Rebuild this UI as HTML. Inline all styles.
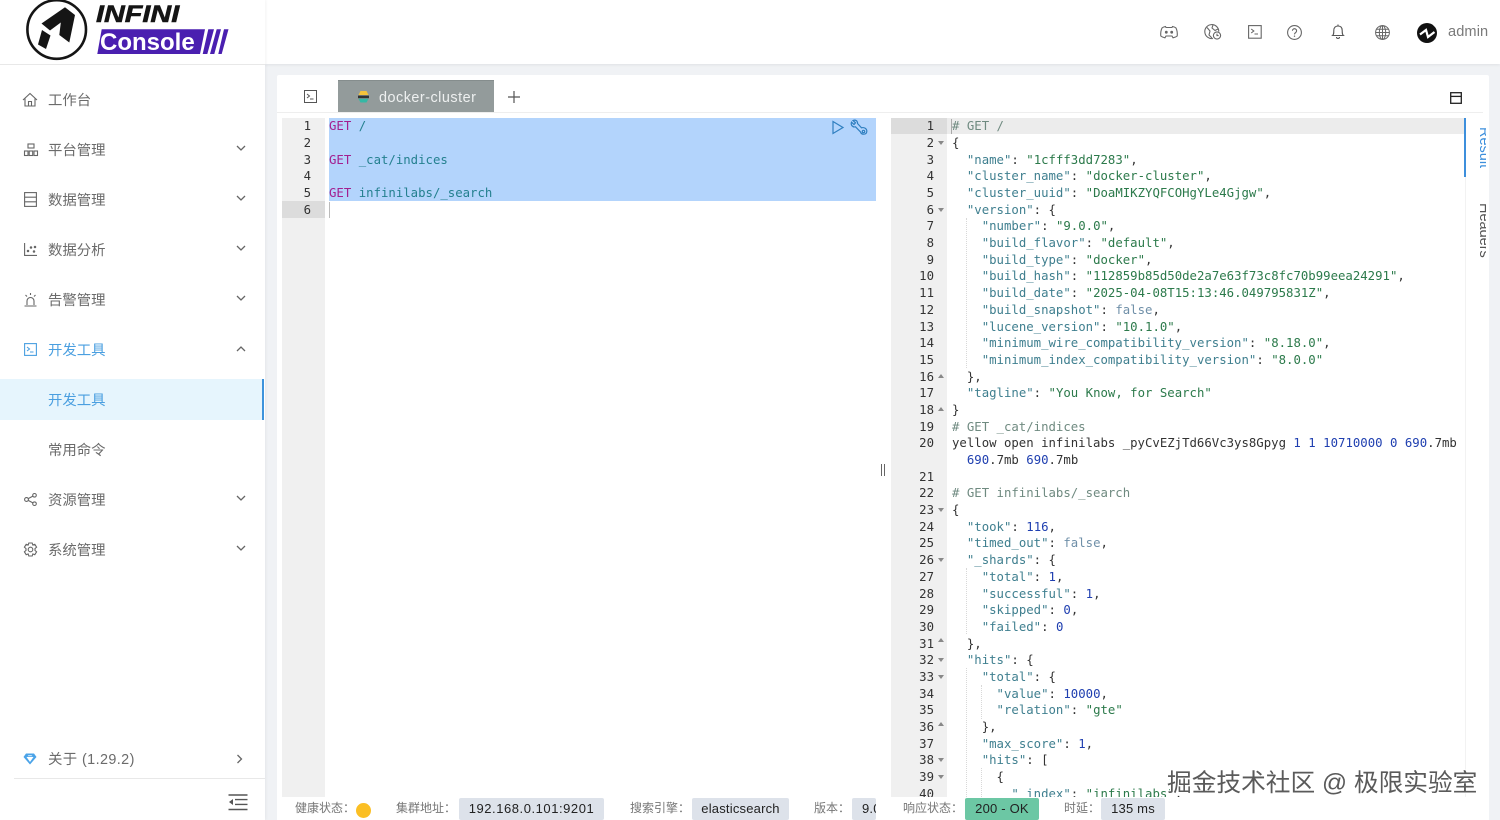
<!DOCTYPE html>
<html lang="zh">
<head>
<meta charset="utf-8">
<title>INFINI Console</title>
<style>
html,body{margin:0;padding:0;width:1500px;height:820px;overflow:hidden;background:#f0f2f5;font-family:"Liberation Sans","Noto Sans CJK SC",sans-serif}
.a{position:absolute}
svg{position:absolute;overflow:visible}
#side{left:0;top:0;width:265px;height:820px;background:#fff;box-shadow:1px 0 3px rgba(0,0,0,.05)}
#head{left:265px;top:0;width:1235px;height:64px;background:#fff;box-shadow:0 1px 3px rgba(0,0,0,.07)}
.m{position:absolute;left:48px;font-size:14.4px;line-height:20px;color:#6b6b6b;white-space:nowrap}
.ic{fill:none;stroke:#666;stroke-width:1.1}
.ch{fill:none;stroke:#666;stroke-width:1.3}
pre{position:absolute;margin:0;font-family:"DejaVu Sans Mono","Liberation Mono",monospace;font-size:12.33px;line-height:16.68px;color:#333;white-space:pre}
.k{color:#3f7f8f}.s{color:#2c7a4b}.n{color:#1f3fb0}.b{color:#6f8fa8}.c{color:#6f8a80}.g{color:#a31f8f}.p{color:#24808f}
.l{position:absolute;font-size:12px;line-height:16px;color:#777;white-space:nowrap;top:800px}
.pill{position:absolute;top:798px;height:22px;background:#dde2ea;border-radius:2px;font-size:13px;line-height:22px;letter-spacing:.2px;color:#222;text-align:center;white-space:nowrap;overflow:hidden}
</style>
</head>
<body>
<div class="a" id="head"></div>
<div class="a" id="side"></div>
<div class="a" style="left:0;top:64px;width:265px;height:1px;background:#e8e8e8"></div>

<!-- Logo -->
<svg style="left:0;top:0" width="265" height="64">
  <circle cx="56.7" cy="29.5" r="29.3" fill="#fff" stroke="#151515" stroke-width="2.6"/>
  <path d="M65 7.3 L75 15 L69.3 42.5 L59.3 35 L60.8 22.5 L50 30.5 L41.5 23.5Z" fill="#151515"/>
  <path d="M42 30 L50.5 35.5 L46 49 L38 44.5Z" fill="#151515"/>
  <path d="M101.7 29.3 L205 29.3 L200 54 L97.3 54Z" fill="#4a1fb0"/>
  <path d="M208.3 29.3 H214 L207.3 54 H202.7Z M216.7 29.3 H221 L214.3 54 H210Z M224 29.3 H228.5 L221.7 54 H218.3Z" fill="#4a1fb0"/>
</svg>
<div class="a" style="left:96px;top:1px;font-size:24px;line-height:27px;font-weight:700;font-style:italic;color:#151515;transform-origin:0 0;transform:scaleX(1.2);-webkit-text-stroke:.6px #151515">INFINI</div>
<div class="a" style="left:100px;top:28px;font-size:24px;line-height:30px;font-weight:700;color:#fff">Console</div>

<!-- Sidebar items -->
<svg style="left:22px;top:92px" width="16" height="16" class="ic"><path d="M1 8 L8 1.5 L15 8 M3 6.5 V14 H13 V6.5 M6.5 14 V9.5 H9.5 V14"/></svg>
<div class="m" style="top:91px">工作台</div>

<svg style="left:24px;top:143px" width="14" height="14" class="ic"><rect x="4" y="1" width="6" height="4"/><rect x=".5" y="8" width="3.5" height="4.5"/><rect x="5.2" y="8" width="3.5" height="4.5"/><rect x="10" y="8" width="3.5" height="4.5"/></svg>
<div class="m" style="top:141px">平台管理</div>
<svg style="left:236px;top:145px" width="10" height="7" class="ch"><path d="M1 1 L5 5 L9 1"/></svg>

<svg style="left:24px;top:192px" width="13" height="15" class="ic"><rect x=".6" y=".6" width="11.8" height="13.8"/><path d="M.6 5.2 H12.4 M.6 9.8 H12.4"/></svg>
<div class="m" style="top:191px">数据管理</div>
<svg style="left:236px;top:195px" width="10" height="7" class="ch"><path d="M1 1 L5 5 L9 1"/></svg>

<svg style="left:24px;top:243px" width="13" height="13" class="ic"><path d="M.6 0 V12.4 H13"/><circle cx="4" cy="8" r=".7" fill="#666"/><circle cx="7" cy="4.5" r=".7" fill="#666"/><circle cx="10" cy="8.5" r=".7" fill="#666"/><circle cx="11" cy="4" r=".7" fill="#666"/></svg>
<div class="m" style="top:241px">数据分析</div>
<svg style="left:236px;top:245px" width="10" height="7" class="ch"><path d="M1 1 L5 5 L9 1"/></svg>

<svg style="left:24px;top:293px" width="13" height="14" class="ic"><path d="M3 12 V8 A3.5 3.5 0 0 1 10 8 V12 M.5 13 H12.5 M6.5 0 V2 M1.5 2 L3 3.5 M11.5 2 L10 3.5"/></svg>
<div class="m" style="top:291px">告警管理</div>
<svg style="left:236px;top:295px" width="10" height="7" class="ch"><path d="M1 1 L5 5 L9 1"/></svg>

<svg style="left:24px;top:343px" width="13" height="13" fill="none" stroke="#4a9fe0" stroke-width="1.1"><rect x=".6" y=".6" width="11.8" height="11.8"/><path d="M3 4 L5.5 6 L3 8 M6 9 H9.5"/></svg>
<div class="m" style="top:341px;color:#4a9fe0">开发工具</div>
<svg style="left:236px;top:346px" width="10" height="7" class="ch"><path d="M1 5 L5 1 L9 5"/></svg>

<div class="a" style="left:0;top:379px;width:262px;height:41px;background:#e6f5fd;border-right:2px solid #3d93dc"></div>
<div class="m" style="top:391px;color:#4a9fe0">开发工具</div>
<div class="m" style="top:441px">常用命令</div>

<svg style="left:24px;top:493px" width="13" height="13" class="ic"><circle cx="2.5" cy="6.5" r="1.9"/><circle cx="10.5" cy="2.3" r="1.8"/><circle cx="10.5" cy="10.7" r="1.8"/><path d="M4.2 5.6 L8.9 3.1 M4.2 7.4 L8.9 9.9"/></svg>
<div class="m" style="top:491px">资源管理</div>
<svg style="left:236px;top:495px" width="10" height="7" class="ch"><path d="M1 1 L5 5 L9 1"/></svg>

<svg style="left:23px;top:542px" width="15" height="15" class="ic"><path d="M5.8 1 H9.2 L9.8 3 L11.8 2.3 L13.6 5.2 L12 6.6 V8.4 L13.6 9.8 L11.8 12.7 L9.8 12 L9.2 14 H5.8 L5.2 12 L3.2 12.7 L1.4 9.8 L3 8.4 V6.6 L1.4 5.2 L3.2 2.3 L5.2 3Z"/><circle cx="7.5" cy="7.5" r="2.3"/></svg>
<div class="m" style="top:541px">系统管理</div>
<svg style="left:236px;top:545px" width="10" height="7" class="ch"><path d="M1 1 L5 5 L9 1"/></svg>

<svg style="left:23px;top:753px" width="14" height="12"><path d="M3 .5 H11 L13.5 4 L7 11.5 L.5 4Z" fill="#4aa3e8"/><path d="M3.5 4 H10.5 L7 9Z" fill="#fff"/><path d="M5.5 2 H8.5 L9.5 3.2 H4.5Z" fill="#bfe0f8"/></svg>
<div class="m" style="top:750px;letter-spacing:.4px">关于 (1.29.2)</div>
<svg style="left:236px;top:754px" width="7" height="10" class="ch"><path d="M1.5 1 L5.5 5 L1.5 9"/></svg>
<div class="a" style="left:14px;top:778px;width:251px;height:1px;background:#e8e8e8"></div>
<svg style="left:228px;top:794px" width="20" height="17"><path d="M.5 1 H19.5 M7 5.6 H19.5 M7 10.4 H19.5 M.5 15.5 H19.5" stroke="#555" stroke-width="1.4" fill="none"/><path d="M5 5 V11 L1 8Z" fill="#555"/></svg>

<!-- Header icons -->
<svg style="left:1160px;top:25px" width="18" height="14" fill="none" stroke="#666" stroke-width="1.1"><path d="M5.5 1.5 C3.5 2 2.5 2.5 2 3 C.8 5.5 .5 8 .8 11 C2 12 3.5 12.6 5 12.8 L6 11 H12 L13 12.8 C14.5 12.6 16 12 17.2 11 C17.5 8 17.2 5.5 16 3 C15.5 2.5 14.5 2 12.5 1.5 L12 2.5 H6Z"/><circle cx="6.3" cy="7.2" r="1.4" fill="#666" stroke="none"/><circle cx="11.7" cy="7.2" r="1.4" fill="#666" stroke="none"/></svg>
<svg style="left:1204px;top:24px" width="18" height="16" fill="none" stroke="#666" stroke-width="1.1"><path d="M9 14.5 A7 7 0 1 1 14.8 7.5"/><path d="M3 3.5 L6 7 L5 11 L8 14 M9 1 L8 4 L11 6.5 L14 5" /><circle cx="13" cy="11.5" r="3.6" fill="#fff"/><path d="M13 9.6 V11.6 H14.6"/></svg>
<svg style="left:1248px;top:25px" width="14" height="14" fill="none" stroke="#666" stroke-width="1.1"><rect x=".6" y=".6" width="12.6" height="12.6"/><path d="M3.2 4 L5.8 6 L3.2 8 M6.5 9 H10"/></svg>
<svg style="left:1287px;top:25px" width="15" height="15" fill="none" stroke="#666" stroke-width="1.1"><circle cx="7.5" cy="7.5" r="6.9"/><path d="M5.4 5.8 A2.1 2.1 0 1 1 8.6 7.6 C7.8 8.1 7.5 8.5 7.5 9.4"/><circle cx="7.5" cy="11.2" r=".7" fill="#666" stroke="none"/></svg>
<svg style="left:1332px;top:24px" width="12" height="15" fill="none" stroke="#555" stroke-width="1.1"><path d="M.6 11.5 C1.8 10.5 1.8 9 1.8 6.5 C1.8 3.5 3.5 2 6 2 C8.5 2 10.2 3.5 10.2 6.5 C10.2 9 10.2 10.5 11.4 11.5Z M6 .5 V2 M4.5 13 A1.5 1.5 0 0 0 7.5 13"/></svg>
<svg style="left:1375px;top:25px" width="15" height="15" fill="none" stroke="#666" stroke-width="1"><circle cx="7.5" cy="7.5" r="6.9"/><ellipse cx="7.5" cy="7.5" rx="3.2" ry="6.9"/><path d="M7.5 .6 V14.4 M.6 7.5 H14.4 M1.5 4.2 H13.5 M1.5 10.8 H13.5"/></svg>
<svg style="left:1417px;top:23px" width="20" height="20"><circle cx="10" cy="10" r="10" fill="#111"/><path d="M3 11.5 L9 7 L11 14 L17.5 9" fill="none" stroke="#fff" stroke-width="2.2"/><path d="M14 0 L20 6 L20 0Z M0 16 L5 20 L0 20Z" fill="#fff"/></svg>
<div class="a" style="left:1448px;top:22.5px;font-size:14.6px;line-height:18px;letter-spacing:.1px;color:#7a7a7a">admin</div>

<!-- Card -->
<div class="a" style="left:277px;top:75px;width:1212px;height:745px;background:#fff;border-radius:2px 2px 0 0"></div>
<div class="a" style="left:277px;top:112px;width:1206px;height:1px;background:#eeeeee"></div>

<svg style="left:304px;top:90px" width="13" height="13" fill="none" stroke="#555" stroke-width="1"><rect x=".5" y=".5" width="12" height="12"/><path d="M3 4 L5.5 6 L3 8 M6 9 H9.5"/></svg>
<div class="a" style="left:338px;top:80px;width:156px;height:32px;background:#939b9b;border-top:1px solid #858d8d;box-sizing:border-box"></div>
<svg style="left:358px;top:90px" width="11" height="14"><path d="M2.5 1 H8.5 L10.5 5 H.5Z" fill="#f5c33b"/><rect x="0" y="5.6" width="11" height="2.6" fill="#333"/><path d="M.5 8.8 H10.5 L8.5 12.5 H2.5Z" fill="#35b8a5"/></svg>
<div class="a" style="left:379px;top:88px;font-size:14.4px;line-height:20px;letter-spacing:.5px;color:#eef0f0;white-space:nowrap">docker-cluster</div>
<svg style="left:508px;top:91px" width="12" height="12" stroke="#555" stroke-width="1.2"><path d="M6 0 V12 M0 6 H12"/></svg>
<svg style="left:1450px;top:92px" width="12" height="12" fill="none" stroke="#222" stroke-width="1.3"><rect x=".7" y=".7" width="10.6" height="10.6"/><path d="M.7 4.4 H11.3"/></svg>

<!-- Left editor -->
<div class="a" style="left:282px;top:118px;width:43px;height:679px;background:#f0f0f0"></div>
<div class="a" style="left:282px;top:201px;width:43px;height:17px;background:#dcdcdc"></div>
<div class="a" style="left:329px;top:118px;width:547px;height:83px;background:#b3d4fc"></div>
<div class="a" style="left:329px;top:202px;width:1px;height:16px;background:#bbb"></div>
<pre style="left:282px;top:118.3px;width:29px;text-align:right">1
2
3
4
5
6</pre>
<pre style="left:329px;top:118.3px"><span class="g">GET</span> <span class="p">/</span>

<span class="g">GET</span> <span class="p">_cat/indices</span>

<span class="g">GET</span> <span class="p">infinilabs/_search</span></pre>
<svg style="left:832px;top:120px" width="12" height="15" fill="none" stroke="#2f7fc0" stroke-width="1.2"><path d="M1 1.5 L11 7.5 L1 13.5Z"/></svg>
<svg style="left:850px;top:119px" width="18" height="17" fill="none" stroke="#2f7fc0" stroke-width="1.2"><path d="M3 1.5 L5.5 3.8 L4 5.5 L1.5 3.2 C.5 6 2.5 8.5 5.5 7.8 L10.5 13 C11.5 16 16.5 16 16.8 12.5 C17 9.5 14 8 11.5 8.8 L7.5 4.5 C8 2 5.5 .5 3 1.5Z"/><circle cx="13.5" cy="12.5" r="1.2"/></svg>

<!-- Splitter -->
<div class="a" style="left:881px;top:464px;width:1px;height:12px;background:#666"></div>
<div class="a" style="left:884px;top:464px;width:1px;height:12px;background:#666"></div>

<!-- Right editor -->
<div class="a" style="left:891px;top:118px;width:56px;height:679px;background:#f0f0f0"></div>
<div class="a" style="left:891px;top:118px;width:574px;height:16px;background:#ececec"></div>
<div class="a" style="left:891px;top:118px;width:56px;height:16px;background:#dcdcdc"></div>
<div class="a" style="left:951px;top:119px;width:1px;height:15px;background:#aaa"></div>
<div class="a" style="left:966px;top:218px;height:150px;border-left:1px dotted #d8d8d8"></div>
<div class="a" style="left:966px;top:568px;height:66px;border-left:1px dotted #d8d8d8"></div>
<div class="a" style="left:966px;top:668px;height:129px;border-left:1px dotted #d8d8d8"></div>
<div class="a" style="left:981px;top:685px;height:34px;border-left:1px dotted #d8d8d8"></div>
<div class="a" style="left:981px;top:768px;height:29px;border-left:1px dotted #d8d8d8"></div>

<div class="a" style="left:891px;top:118px;width:574px;height:679px;overflow:hidden">
<pre style="left:0;top:.3px;width:43px;text-align:right">1
2
3
4
5
6
7
8
9
10
11
12
13
14
15
16
17
18
19
20

21
22
23
24
25
26
27
28
29
30
31
32
33
34
35
36
37
38
39
40</pre>
<pre style="left:61px;top:.3px"><span class="c"># GET /</span>
{
  <span class="k">"name"</span>: <span class="s">"1cfff3dd7283"</span>,
  <span class="k">"cluster_name"</span>: <span class="s">"docker-cluster"</span>,
  <span class="k">"cluster_uuid"</span>: <span class="s">"DoaMIKZYQFCOHgYLe4Gjgw"</span>,
  <span class="k">"version"</span>: {
    <span class="k">"number"</span>: <span class="s">"9.0.0"</span>,
    <span class="k">"build_flavor"</span>: <span class="s">"default"</span>,
    <span class="k">"build_type"</span>: <span class="s">"docker"</span>,
    <span class="k">"build_hash"</span>: <span class="s">"112859b85d50de2a7e63f73c8fc70b99eea24291"</span>,
    <span class="k">"build_date"</span>: <span class="s">"2025-04-08T15:13:46.049795831Z"</span>,
    <span class="k">"build_snapshot"</span>: <span class="b">false</span>,
    <span class="k">"lucene_version"</span>: <span class="s">"10.1.0"</span>,
    <span class="k">"minimum_wire_compatibility_version"</span>: <span class="s">"8.18.0"</span>,
    <span class="k">"minimum_index_compatibility_version"</span>: <span class="s">"8.0.0"</span>
  },
  <span class="k">"tagline"</span>: <span class="s">"You Know, for Search"</span>
}
<span class="c"># GET _cat/indices</span>
yellow open infinilabs _pyCvEZjTd66Vc3ys8Gpyg <span class="n">1</span> <span class="n">1</span> <span class="n">10710000</span> <span class="n">0</span> <span class="n">690</span>.7mb
  <span class="n">690</span>.7mb <span class="n">690</span>.7mb

<span class="c"># GET infinilabs/_search</span>
{
  <span class="k">"took"</span>: <span class="n">116</span>,
  <span class="k">"timed_out"</span>: <span class="b">false</span>,
  <span class="k">"_shards"</span>: {
    <span class="k">"total"</span>: <span class="n">1</span>,
    <span class="k">"successful"</span>: <span class="n">1</span>,
    <span class="k">"skipped"</span>: <span class="n">0</span>,
    <span class="k">"failed"</span>: <span class="n">0</span>
  },
  <span class="k">"hits"</span>: {
    <span class="k">"total"</span>: {
      <span class="k">"value"</span>: <span class="n">10000</span>,
      <span class="k">"relation"</span>: <span class="s">"gte"</span>
    },
    <span class="k">"max_score"</span>: <span class="n">1</span>,
    <span class="k">"hits"</span>: [
      {
        <span class="k">"_index"</span>: <span class="s">"infinilabs"</span>,</pre>
</div>

<svg style="left:938px;top:118px" width="8" height="679" fill="#888">
  <path d="M0 23 H6 L3 27Z M0 90 H6 L3 94Z M0 390 H6 L3 394Z M0 440 H6 L3 444Z M0 540 H6 L3 544Z M0 557 H6 L3 561Z M0 640 H6 L3 644Z M0 657 H6 L3 661Z"/>
  <path d="M0 260 H6 L3 256Z M0 293 H6 L3 289Z M0 524 H6 L3 520Z M0 608 H6 L3 604Z"/>
</svg>

<!-- Right tabs -->
<div class="a" style="left:1465px;top:118px;width:1px;height:679px;background:#f2f2f2"></div>
<div class="a" style="left:1464px;top:118px;width:2px;height:59px;background:#3d8fdc"></div>
<div class="a" style="left:1467px;top:118px;width:19px;height:160px;overflow:hidden">
  <div class="a" style="left:27px;top:9px;transform-origin:0 0;transform:rotate(90deg);font-size:14.5px;line-height:20px;color:#3d8fdc;white-space:nowrap">Result</div>
  <div class="a" style="left:27px;top:85px;transform-origin:0 0;transform:rotate(90deg);font-size:14.5px;line-height:20px;color:#555;white-space:nowrap">Headers</div>
</div>

<!-- Status bars -->
<div class="a" style="left:277px;top:797px;width:1212px;height:23px;background:#fff"></div>
<div class="l" style="left:295px">健康状态：</div>
<div class="a" style="left:356px;top:803px;width:15px;height:15px;border-radius:50%;background:#fbbf24"></div>
<div class="l" style="left:396px">集群地址：</div>
<div class="pill" style="left:459px;width:145px;letter-spacing:.55px">192.168.0.101:9201</div>
<div class="l" style="left:630px">搜索引擎：</div>
<div class="pill" style="left:692px;width:97px">elasticsearch</div>
<div class="l" style="left:814px">版本：</div>
<div class="pill" style="left:852px;width:24px;text-align:left;padding-left:10px;box-sizing:border-box">9.0.0</div>
<div class="l" style="left:903px">响应状态：</div>
<div class="pill" style="left:965px;width:74px;background:#6cc7a4">200 - OK</div>
<div class="l" style="left:1064px">时延：</div>
<div class="pill" style="left:1101px;width:64px">135 ms</div>

<!-- Watermark -->
<div class="a" style="left:1167px;top:769px;font-size:24.7px;line-height:30px;color:#5a5a5a;white-space:nowrap;text-shadow:-1px 0 #fff,1px 0 #fff,0 -1px #fff,0 1px #fff">掘金技术社区 @ 极限实验室</div>
</body>
</html>
